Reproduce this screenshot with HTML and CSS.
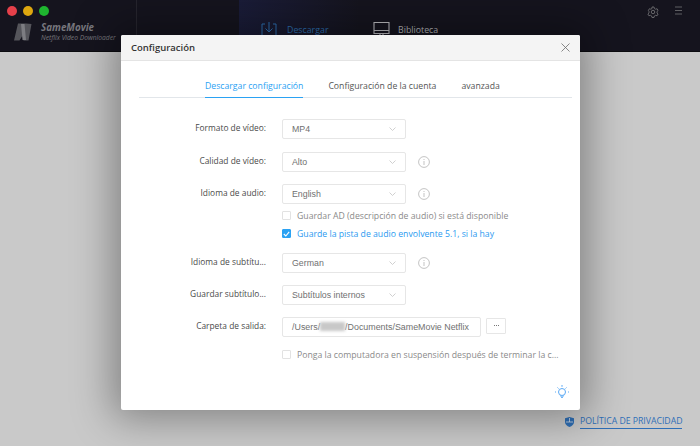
FILE: index.html
```html
<!DOCTYPE html>
<html lang="es">
<head>
<meta charset="utf-8">
<title>SameMovie</title>
<link rel="stylesheet" href="styles.css">
</head>
<body>
<div class="app">
  <header class="topbar">
    <div class="brand-col">
      <div class="lights"><i class="light red"></i><i class="light yellow"></i><i class="light green"></i></div>
      <div class="brand">
        <svg class="logo" width="18" height="18" viewBox="0 0 18 18"><path d="M4 0.500h8l5.500 0.500-3 16.500h-5l-1-5-3 5h-5.500z" fill="#55555b"/><path d="M7 1l3.500 0 1.500 16h-3.500z" fill="#7d7d82"/></svg>
        <div class="brand-text"><div class="brand-name">SameMovie</div><div class="brand-sub">Netflix Video Downloader</div></div>
      </div>
    </div>
    <nav class="nav">
      <div class="nav-active">
        <svg width="16" height="18" viewBox="0 0 16 18" fill="none" stroke="#2d6fb0" stroke-width="1"><path d="M4 3H1v13h14V3h-3M8 1v10M4.500 7.500 8 11l3.500-3.500"/></svg>
        <span class="nav-label blue">Descargar</span>
      </div>
      <div class="nav-item">
        <svg width="17" height="18" viewBox="0 0 17 18" fill="none" stroke="#b9b9bd" stroke-width="1.100"><path d="M1 1.500h15v11H1zM1 9.500h15M7 12.500v4M10 12.500v4"/></svg>
        <span class="nav-label">Biblioteca</span>
      </div>
    </nav>
    <div class="tools">
      <svg width="12" height="12" viewBox="0 0 24 24" fill="none" stroke="#6f6f73" stroke-width="1.800"><circle cx="12" cy="12" r="3.500"/><path d="M10 2h4l.7 3 2.500 1.400 3-.9 2 3.500-2.200 2.100v2.800l2.200 2.100-2 3.500-3-.9-2.500 1.400-.7 3h-4l-.7-3-2.500-1.400-3 .9-2-3.500 2.200-2.100v-2.800L2.800 9 4.800 5.500l3 .9L10 5z"/></svg>
      <svg width="7" height="9" viewBox="0 0 7 9" stroke="#5f5f63" stroke-width="1"><path d="M0 1h7M0 4.500h7M0 8h7"/></svg>
    </div>
  </header>
  <main class="content">
    <a class="privacy">
      <svg width="9" height="10" viewBox="0 0 9 10"><path d="M4.500 0 9 1.300V5c0 2.500-2 4-4.500 5C2 9 0 7.500 0 5V1.300z" fill="#2f6fb5"/><path d="M4.500 1v4H1M4.500 5h3.500" stroke="#d5dde8" stroke-width=".8" fill="none"/></svg>
      <span class="privacy-text">POLÍTICA DE PRIVACIDAD</span>
    </a>
  </main>

  <section class="modal">
    <div class="modal-head">
      <h1 class="modal-title">Configuración</h1>
      <svg class="close" width="9" height="9" viewBox="0 0 9 9" stroke="#6b6b6b" stroke-width=".8"><path d="M.5.500l8 8M8.500.500l-8 8"/></svg>
    </div>
    <div class="modal-body">
      <div class="tabs">
        <span class="tab active">Descargar configuración</span>
        <span class="tab">Configuración de la cuenta</span>
        <span class="tab">avanzada</span>
      </div>
      <div class="form">
        <div class="row r-format"><label class="label">Formato de vídeo:</label><div class="select"><span>MP4</span><svg class="chev" width="7" height="4" viewBox="0 0 7 4"><path d="M.5.500l3 3 3-3" fill="none" stroke="#c4c4c4" stroke-width=".8"/></svg></div></div>
        <div class="row r-quality"><label class="label">Calidad de vídeo:</label><div class="select"><span>Alto</span><svg class="chev" width="7" height="4" viewBox="0 0 7 4"><path d="M.5.500l3 3 3-3" fill="none" stroke="#c4c4c4" stroke-width=".8"/></svg></div><svg class="info" width="12" height="12" viewBox="0 0 12 12" fill="none" stroke="#b4b4b4" stroke-width=".8"><circle cx="6" cy="6" r="5.400"/><path d="M6 5v4M6 3v1"/></svg></div>
        <div class="row r-audio"><label class="label">Idioma de audio:</label><div class="select"><span>English</span><svg class="chev" width="7" height="4" viewBox="0 0 7 4"><path d="M.5.500l3 3 3-3" fill="none" stroke="#c4c4c4" stroke-width=".8"/></svg></div><svg class="info" width="12" height="12" viewBox="0 0 12 12" fill="none" stroke="#b4b4b4" stroke-width=".8"><circle cx="6" cy="6" r="5.400"/><path d="M6 5v4M6 3v1"/></svg></div>
        <div class="check-row r-ad"><i class="box"></i><span class="check-text">Guardar AD (descripción de audio) si está disponible</span></div>
        <div class="check-row r-surround"><i class="box checked"><svg width="7" height="6" viewBox="0 0 7 6"><path d="M.8 3l2 2L6.200.800" fill="none" stroke="#fff" stroke-width="1.100"/></svg></i><span class="check-text blue-text">Guarde la pista de audio envolvente 5.1, si la hay</span></div>
        <div class="row r-sublang"><label class="label">Idioma de subtítu...</label><div class="select"><span>German</span><svg class="chev" width="7" height="4" viewBox="0 0 7 4"><path d="M.5.500l3 3 3-3" fill="none" stroke="#c4c4c4" stroke-width=".8"/></svg></div><svg class="info" width="12" height="12" viewBox="0 0 12 12" fill="none" stroke="#b4b4b4" stroke-width=".8"><circle cx="6" cy="6" r="5.400"/><path d="M6 5v4M6 3v1"/></svg></div>
        <div class="row r-subsave"><label class="label">Guardar subtítulo...</label><div class="select"><span>Subtítulos internos</span><svg class="chev" width="7" height="4" viewBox="0 0 7 4"><path d="M.5.500l3 3 3-3" fill="none" stroke="#c4c4c4" stroke-width=".8"/></svg></div></div>
        <div class="row r-out"><label class="label">Carpeta de salida:</label><div class="path"><span>/Users/</span><i class="blur"></i><span>/Documents/SameMovie Netflix</span></div><div class="dots"><i></i><i></i><i></i></div></div>
        <div class="check-row r-sleep"><i class="box"></i><span class="check-text">Ponga la computadora en suspensión después de terminar la c...</span></div>
      </div>
      <div class="bulb-row">
        <svg width="14" height="15" viewBox="0 0 14 15" fill="none" stroke="#5aa9f5" stroke-width="1"><circle cx="7" cy="7" r="3.500"/><path d="M5.500 10.500 7 13l1.500-2.500M7 0v1.800M1 7H0M14 7h-1M2.500 2.500l1 1M11.500 2.500l-1 1"/></svg>
      </div>
    </div>
  </section>
</div>
</body>
</html>
```
FILE: styles.css
```css
* { box-sizing: border-box; }
html, body { margin: 0; padding: 0; }
body { width: 700px; height: 446px; overflow: hidden; font-family: "Open Sans", sans-serif; background: #c9c9c9; }
.app { position: relative; width: 700px; height: 446px; display: flex; flex-direction: column; }

.topbar { height: 52px; flex: none; display: flex; background: #15141e; border-bottom: 1px solid #0c0c10; }
.brand-col { width: 137px; border-right: 1px solid #26252e; padding: 6px 0 0 7px; }
.lights { display: flex; gap: 6px; padding-bottom: 6px; }
.light { width: 10px; height: 10px; border-radius: 50%; display: block; }
.red { background: #e5404a; }
.yellow { background: #dea70f; }
.green { background: #1eb52f; }
.brand { display: flex; gap: 9px; padding-left: 7px; align-items: center; }
.brand-text { font-style: italic; color: #77777d; white-space: nowrap; }
.brand-name { font-size: 9.800px; line-height: 11px; font-weight: 700; }
.brand-sub { font-size: 6.700px; line-height: 9px; }

.nav { flex: none; display: flex; }
.nav-active { width: 121px; margin-left: 102px; padding: 21px 0 0 22px; display: flex; gap: 10px; background: linear-gradient(90deg, #1a1c38, #15141e); height: 51px; }
.nav-item { padding: 21px 0 0 0; margin-left: 13px; display: flex; gap: 8px; }
.nav-label { font-size: 8.800px; line-height: 14px; color: #b4b4b8; padding-top: 2px; }
.blue { color: #2d6fb0; }
.tools { margin-left: auto; display: flex; gap: 16px; padding: 6px 18px 0 0; align-items: flex-start; }

.content { flex: 1; position: relative; }
.privacy { position: absolute; left: 565px; top: 362px; display: flex; gap: 6px; align-items: center; }
.privacy-text { font-size: 8.700px; line-height: 14px; color: #2f6fb8; border-bottom: 1px solid #2f6fb8; }

.modal { position: absolute; left: 121px; top: 35px; width: 459px; height: 375px; background: #fff; border-radius: 2px; box-shadow: 0 0 40px 8px rgba(0,0,0,.36); display: flex; flex-direction: column; }
.modal-head { height: 26px; flex: none; display: flex; align-items: center; justify-content: space-between; padding: 0 10px 0 10px; background: #f4f4f4; border-bottom: 1px solid #e4e4e4; border-radius: 2px 2px 0 0; }
.modal-title { margin: 0; font-size: 9.500px; font-weight: 600; color: #333; }
.modal-body { flex: 1; display: flex; flex-direction: column; padding: 0 8px 0 18px; }

.tabs { height: 37px; flex: none; display: flex; padding-left: 66px; gap: 25px; border-bottom: 1px solid #e2e6ea; }
.tab { font-size: 8.700px; line-height: 14px; padding-top: 18px; height: 37px; color: #555; white-space: nowrap; }
.tab.active { color: #2ba2f3; border-bottom: 1px solid #2ba2f3; }

.form { display: flex; flex-direction: column; padding-top: 21px; }
.row { display: flex; align-items: flex-start; height: 21px; }
.label { width: 127px; padding-top: 3px; text-align: right; font-size: 8.400px; line-height: 12px; color: #4a4a4a; white-space: nowrap; flex: none; }
.select { margin-left: 16px; width: 124px; height: 20px; border: 1px solid #e6e6e6; border-radius: 2px; padding: 0 9px; display: flex; align-items: center; justify-content: space-between; font-family: "Liberation Sans", sans-serif; font-size: 8.800px; color: #707070; }
.info { margin: 4px 0 0 12px; }
.r-quality { margin-top: 11.500px; }
.r-audio { margin-top: 11px; }
.check-row { display: flex; align-items: center; padding-left: 143px; gap: 6px; height: 12px; }
.r-ad { margin-top: 5px; }
.r-surround { margin-top: 6px; }
.r-sublang { margin-top: 13px; }
.r-subsave { margin-top: 11px; }
.r-out { margin-top: 11px; }
.r-sleep { margin-top: 11px; }
.box { width: 9px; height: 9px; border: 1px solid #e2e2e2; border-radius: 1px; display: flex; align-items: center; justify-content: center; flex: none; }
.box.checked { background: #2ba2f3; border-color: #2ba2f3; }
.check-text { font-size: 8.700px; line-height: 12px; color: #8a8a8a; white-space: nowrap; }
.blue-text { color: #2b9af0; }
.path { margin-left: 16px; width: 199px; height: 20px; border: 1px solid #e6e6e6; border-radius: 2px; padding: 0 9px; display: flex; align-items: center; font-family: "Liberation Sans", sans-serif; font-size: 8.900px; color: #707070; white-space: nowrap; }
.blur { width: 25px; height: 9px; background: #c8c8c8; filter: blur(1.500px); flex: none; }
.dots { margin-left: 5px; width: 20px; height: 16px; margin-top: 1px; border: 1px solid #e6e6e6; border-radius: 1px; display: flex; align-items: center; justify-content: center; gap: 1px; }
.dots i { width: 1px; height: 1px; background: #777; }
.bulb-row { margin-top: auto; display: flex; justify-content: flex-end; padding: 0 3px 10px 0; }
```
